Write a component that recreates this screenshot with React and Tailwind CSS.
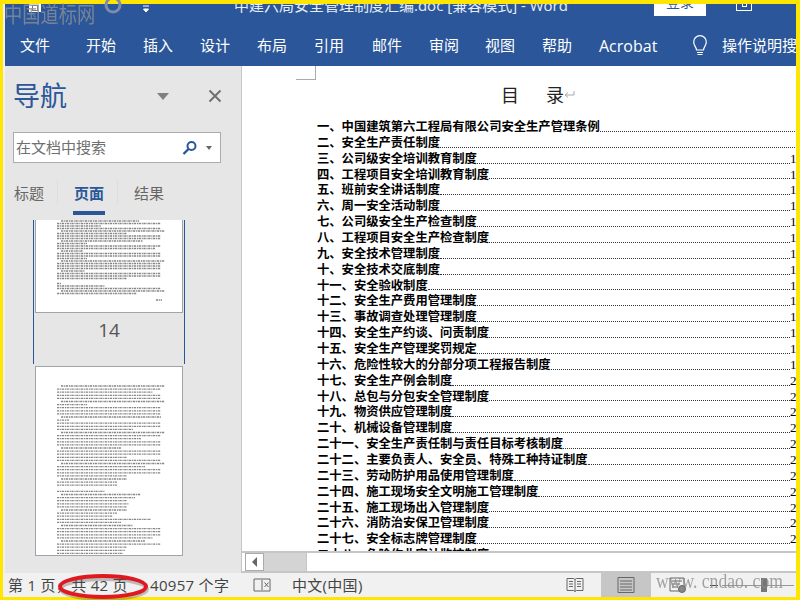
const toc = [
  ["一、中国建筑第六工程局有限公司安全生产管理条例", ""],
  ["二、安全生产责任制度", ""],
  ["三、公司级安全培训教育制度", "10"],
  ["四、工程项目安全培训教育制度", "11"],
  ["五、班前安全讲话制度", "12"],
  ["六、周一安全活动制度", "12"],
  ["七、公司级安全生产检查制度", "13"],
  ["八、工程项目安全生产检查制度", "13"],
  ["九、安全技术管理制度", "14"],
  ["十、安全技术交底制度", "14"],
  ["十一、安全验收制度", "14"],
  ["十二、安全生产费用管理制度", "15"],
  ["十三、事故调查处理管理制度", "16"],
  ["十四、安全生产约谈、问责制度", "17"],
  ["十五、安全生产管理奖罚规定", "18"],
  ["十六、危险性较大的分部分项工程报告制度", "19"],
  ["十七、安全生产例会制度", "20"],
  ["十八、总包与分包安全管理制度", "21"],
  ["十九、物资供应管理制度", "22"],
  ["二十、机械设备管理制度", "22"],
  ["二十一、安全生产责任制与责任目标考核制度", "23"],
  ["二十二、主要负责人、安全员、特殊工种持证制度", "24"],
  ["二十三、劳动防护用品使用管理制度", "24"],
  ["二十四、施工现场安全文明施工管理制度", "25"],
  ["二十五、施工现场出入管理制度", "26"],
  ["二十六、消防治安保卫管理制度", "26"],
  ["二十七、安全标志牌管理制度", "27"],
  ["二十八、危险作业审计监控制度", "27"],
];

const tabs = [
  ["开始", "w-[57px]"], ["插入", "w-[57px]"], ["设计", "w-[57px]"], ["布局", "w-[57px]"],
  ["引用", "w-[58px]"], ["邮件", "w-[57px]"], ["审阅", "w-[56px]"], ["视图", "w-[57px]"], ["帮助", "w-[57px]"],
];

function PageLines({ lines, height }) {
  return (
    <svg width="146" height={height} className="block blur-[0.4px]">
      {lines.map(([x, w, y], i) => (
        <line key={i} x1={x} x2={x + w} y1={y} y2={y} stroke="#444" strokeWidth="1.300" strokeDasharray="2.300 0.800 1.100 0.600" opacity={0.65} />
      ))}
    </svg>
  );
}

const W = 104;
const widthsA = [78,104,44,104,104,70,104,104,82,30,104,98,22,104,104,30,104,104,104,104,24,104,104,70,0,4,48,104,104,80];
const linesA = widthsA.map((w, i) => [i % 4 === 0 ? 25 : 21, w > 100 ? W : w, 1 + i * 2.5]).filter(([, w]) => w > 0);
const widthsB = [104,104,96,104,104,104,30,104,104,104,100,12,104,104,76,104,104,84,104,104,60,104,104,70,104,104,88,104,104,70,66,60,60,0,48,80,78,70,72,70,66,60,56,94,64,72,104,104,104,96,84,104,70,68,66,76,70,66];
const linesB = widthsB.map((w, i) => [i % 5 === 0 ? 25 : 21, w > 100 ? W : w, 19 + i * 3.1]).filter(([, w, y]) => w > 0 && y < 190);

export default function App() {
  return (
    <div className="relative w-[800px] h-[600px] overflow-hidden bg-[#ffe600] pt-[4px] pb-[3px] pl-[3px] pr-[4px] font-['Open_Sans','Noto_Sans_CJK_SC',sans-serif]">
      <div className="flex flex-col h-full bg-[#f1f1f1] pl-[2px]">
        {/* Title bar */}
        <div className="flex items-start h-[29px] bg-[#2b579a] text-white overflow-hidden">
          <div className="w-[12px] h-[8px] bg-white ml-[24px] flex items-center justify-center">
            <div className="w-[6px] h-[6px] border border-[#777]" />
          </div>
          <svg width="10" height="10" viewBox="0 0 10 10" className="ml-[101px]">
            <path d="M1 2h6M1.500 5l2.500 3 2.500-3z" fill="#fff" stroke="#fff" strokeWidth="1" />
          </svg>
          <div className="ml-[82px] -mt-[9px] text-[15px] leading-[20px] whitespace-nowrap text-[#e6ecf5] w-[420px]">
            中建六局安全管理制度汇编.doc [兼容模式] - Word
          </div>
          <div className="w-[52px] h-[12px] bg-white text-[#2b579a] text-[14px] leading-[12px] text-center overflow-hidden">
            <div className="-mt-[8px]">登录</div>
          </div>
          <div className="ml-[30px] w-[16px] h-[7px] border border-t-0 border-white relative">
            <div className="ml-[5px] w-[5px] h-[3px] border border-t-0 border-white" />
          </div>
        </div>
        {/* Ribbon tabs */}
        <div className="flex items-center h-[33px] pb-[8px] bg-[#2b579a] text-white text-[15px]">
          <div className="ml-[15px] w-[66px]">文件</div>
          {tabs.map(([t, w]) => (
            <div key={t} className={w}>{t}</div>
          ))}
          <div className="w-[92px] text-[16px] font-['Open_Sans',sans-serif]">Acrobat</div>
          <svg width="18" height="22" viewBox="0 0 18 22" fill="none" stroke="#fff" strokeWidth="1.2">
            <path d="M5.500 15c0-3-2.800-4-2.800-8a6.300 6.300 0 0 1 12.600 0c0 4-2.800 5-2.800 8z" />
            <path d="M6 17.500h6M6.500 19.500h5" />
          </svg>
          <div className="ml-[13px] whitespace-nowrap overflow-hidden w-[74px]">操作说明搜索</div>
        </div>
        {/* Body */}
        <div className="flex flex-1 min-h-0">
          {/* Nav pane */}
          <div className="w-[237px] shrink-0 flex flex-col bg-[#e6e6e6] border-r border-[#c6c6c6]">
            <div className="flex items-center h-[60px] pl-[8px]">
              <div className="text-[27px] leading-[36px] text-[#2b579a] font-['Noto_Sans_CJK_SC',sans-serif] -mt-[2px]">导航</div>
              <div className="ml-[90px] w-0 h-0 border-l-[6px] border-r-[6px] border-t-[7px] border-l-transparent border-r-transparent border-t-[#808080]" />
              <svg width="14" height="14" viewBox="0 0 14 14" className="ml-[39px]" stroke="#707070" strokeWidth="2">
                <path d="M1.500 1.500l11 11M12.500 1.500l-11 11" />
              </svg>
            </div>
            <div className="mt-[6px] ml-[8px] w-[208px] h-[31px] shrink-0 bg-white border border-[#ababab] flex items-center pl-[2px]">
              <span className="text-[15px] text-[#6f6f6f] whitespace-nowrap font-['Noto_Sans_CJK_SC',sans-serif]">在文档中搜索</span>
              <svg width="16" height="16" viewBox="0 0 16 16" fill="none" stroke="#2b579a" strokeWidth="2" className="ml-[76px]">
                <circle cx="9.500" cy="6" r="4" />
                <path d="M6.500 9l-5 5" strokeWidth="2.400" />
              </svg>
              <div className="ml-[8px] w-0 h-0 border-l-[3.500px] border-r-[3.500px] border-t-[4px] border-l-transparent border-r-transparent border-t-[#666]" />
            </div>
            <div className="flex items-start h-[53px] mt-[1px] shrink-0 text-[15px] ml-[9px] font-['Noto_Sans_CJK_SC',sans-serif]">
              <div className="w-[43px] pt-[18px] text-[#666]">标题</div>
              <div className="w-px h-[24px] mt-[16px] bg-[#dedede]" />
              <div className="w-[59px] pl-[16px] pt-[18px] text-[#2b579a] font-bold">
                <div className="w-[32px] -ml-[1px] pl-[1px] h-[33px] border-b-[4px] border-[#2b579a] whitespace-nowrap">页面</div>
              </div>
              <div className="w-px h-[24px] mt-[16px] bg-[#dedede]" />
              <div className="pl-[16px] pt-[18px] text-[#666]">结果</div>
            </div>
            {/* Thumbnails */}
            <div className="flex-1 min-h-0 overflow-hidden mt-[3px] ml-[28px] w-[152px]">
              <div className="w-[152px] h-[144px] border-x border-[#2b579a] flex flex-col items-center">
                <div className="w-[148px] h-[93px] bg-white border-x border-b border-[#a0a5ab] overflow-hidden shrink-0">
                  <PageLines lines={[...linesA, [120, 6, 80]]} height={92} />
                </div>
                <div className="mt-[2px] text-[19px] leading-[30px] text-[#555]">14</div>
              </div>
              <div className="mt-[2px] mx-auto w-[148px] h-[190px] bg-white border-x border-t border-b border-[#a0a5ab] overflow-hidden">
                <PageLines lines={linesB} height={190} />
              </div>
            </div>
          </div>
          {/* Document */}
          <div className="flex-1 min-w-0 flex flex-col">
            <div className="relative flex-1 min-h-0 bg-white overflow-hidden border-b-2 border-[#c6c6c6]">
              <div className="ml-[54px] w-[20px] h-[14px] border-r border-b border-[#aaa]" />
              <div className="flex mt-[2px] h-[24px] items-center pl-[259px] text-[18px] text-[#222] font-['Noto_Sans_CJK_SC',sans-serif]">
                <span>目</span>
                <span className="ml-[27px]">录</span>
                <svg width="11" height="10" viewBox="0 0 11 10" fill="none" stroke="#aaa" strokeWidth="1" className="mt-[2px]">
                  <path d="M10 1v4H1.500M4 2.500L1 5l3 2.500" />
                </svg>
              </div>
              <div className="mt-[13px] ml-[75px] w-[487px] font-['Noto_Sans_CJK_SC',sans-serif] font-bold text-[12.3px] text-black">
                {toc.map(([t, p]) => (
                  <div key={t} className="flex items-end h-[15.86px] leading-[15.86px] whitespace-nowrap">
                    <span>{t}</span>
                    <span className="flex-1 mb-[3px] border-b border-dotted border-[#333]" />
                    <span className={p ? "w-[14px] font-normal font-['Liberation_Serif',serif] text-[13px]" : "w-[9px]"}>{p}</span>
                  </div>
                ))}
              </div>
            </div>
            {/* Horizontal scrollbar */}
            <div className="flex h-[20px] shrink-0 bg-white border-b-2 border-[#c6c6c6]">
              <div className="ml-[3px] w-[19px] h-[18px] border border-[#ababab] flex items-center justify-center">
                <div className="w-0 h-0 border-y-[5px] border-r-[5px] border-y-transparent border-r-[#666]" />
              </div>
              <div className="w-[42px] bg-[#d4d4d4]" />
              <div className="flex-1 border-l border-[#c6c6c6]" />
            </div>
          </div>
        </div>
        {/* Status bar */}
        <div className="flex items-center h-[24px] shrink-0 bg-[#f1f1f1] text-[15px] tracking-[0.3px] text-[#444]">
          <div className="ml-[3px] whitespace-nowrap w-[142px]">第 1 页，共 42 页</div>
          <div className="whitespace-nowrap w-[103px]">40957 个字</div>
          <svg width="18" height="14" viewBox="0 0 18 14" fill="none" stroke="#666" strokeWidth="1">
            <path d="M8 1H1v12h7M9 0v14M10 1h7v12h-7M11.500 4.500l4 4.500M15.500 4.500l-4 4.500" />
          </svg>
          <div className="ml-[21px] w-[274px] whitespace-nowrap">中文(中国)</div>
          <svg width="18" height="16" viewBox="0 0 18 16" fill="none" stroke="#666" strokeWidth="1">
            <path d="M1 1.500h6.500l1.500 1 1.500-1H17v12h-6.500L9 14.500 7.500 13.500H1zM9 2.500v12M3 4.500h4M3 7h4M3 9.500h4M11 4.500h4M11 7h4M11 9.500h4" />
          </svg>
          <div className="ml-[17px] w-[50px] self-stretch bg-[#c6c6c6] flex items-center justify-center">
            <svg width="18" height="16" viewBox="0 0 18 16" fill="none" stroke="#666" strokeWidth="1">
              <path d="M1 .500h16v15H1zM3 4h12M3 7h12M3 10h12M3 13h12" />
            </svg>
          </div>
          <svg width="18" height="16" viewBox="0 0 18 16" fill="none" stroke="#666" strokeWidth="1" className="ml-[18px]">
            <path d="M1 1h14v13H1zM3 4h10M3 7h8M3 10h6" />
            <circle cx="13" cy="12" r="3.500" fill="#888" />
          </svg>
          <div className="ml-[23px] w-[8px] h-[1px] bg-[#444]" />
          <div className="relative ml-[4px] w-[72px] h-[1px] bg-[#999]">
            <div className="absolute left-[39px] -top-[7px] w-[6px] h-[14px] bg-[#777]" />
          </div>
        </div>
      </div>

      {/* Watermarks and annotation overlays */}
      <div className="absolute left-[4px] -top-[1px] origin-left scale-x-[0.83] text-[22px] leading-[26px] text-[#8c8f96]/80 whitespace-nowrap font-['Noto_Sans_CJK_SC',sans-serif]">中国道标网</div>
      <svg width="20" height="20" viewBox="0 0 20 20" className="absolute left-[103px] -top-[5px]" fill="none" stroke="#7d8cab" strokeWidth="3">
        <circle cx="10" cy="10" r="7" />
      </svg>
      <div className="absolute left-[656px] top-[568px] origin-left scale-x-[0.8] text-[22px] leading-[26px] text-[#8d8d8d]/80 whitespace-nowrap font-['Liberation_Serif',serif]">www. cndao. com</div>
      <svg width="104" height="36" viewBox="0 0 104 36" className="absolute left-[52px] top-[568px]" fill="none">
        <ellipse cx="52" cy="21" rx="43" ry="10" stroke="#555" strokeOpacity="0.35" strokeWidth="4" />
        <ellipse cx="51" cy="18.500" rx="43" ry="10.500" stroke="#e01820" strokeWidth="4" />
      </svg>
    </div>
  );
}
